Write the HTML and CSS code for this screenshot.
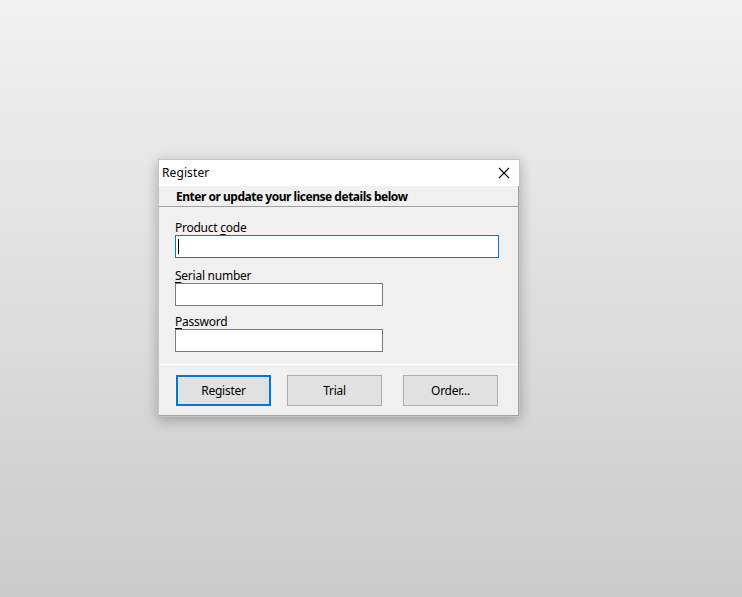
FILE: index.html
```html
<!DOCTYPE html>
<html>
<head>
<meta charset="utf-8">
<link rel="stylesheet" href="styles.css">
</head>
<body>
<div class="desktop">
  <div class="dialog">
    <div class="titlebar">
      <span class="title">Register</span>
      <svg class="close" width="12" height="12" viewBox="0 0 12 12"><path d="M1 1 L11 11 M11 1 L1 11" stroke="#000" stroke-width="1.1" fill="none"/></svg>
    </div>
    <div class="content">
      <div class="header">Enter or update your license details below</div>
      <div class="form">
        <div class="label">Product <u>c</u>ode</div>
        <div class="field wide focused"><span class="caret"></span></div>
        <div class="label l2"><u>S</u>erial number</div>
        <div class="field"></div>
        <div class="label l3"><u>P</u>assword</div>
        <div class="field"></div>
      </div>
      <div class="footer">
        <div class="btn default">Register</div>
        <div class="btn b2">Trial</div>
        <div class="btn b3">Order...</div>
      </div>
    </div>
  </div>
</div>
</body>
</html>
```

FILE: styles.css
```css
html, body {
  margin: 0;
  padding: 0;
}
body {
  width: 742px;
  height: 597px;
  background: linear-gradient(to bottom, #f1f1f1 0%, #cbcbcb 100%);
  font-family: "Noto Sans", "Open Sans", sans-serif;
  font-size: 12px;
  letter-spacing: -0.25px;
  color: #000;
  overflow: hidden;
}
.desktop {
  padding: 159px 0 0 158px;
}
.dialog {
  width: 360px;
  border: 1px solid #c4c4c4;
  background: #fff;
  box-shadow: 0 3px 12px rgba(0, 0, 0, 0.28);
}
.titlebar {
  height: 26px;
  display: flex;
  align-items: center;
  justify-content: space-between;
  padding: 0 9px 0 3px;
  background: #fff;
}
.title {
  line-height: 26px;
  letter-spacing: 0.1px;
}
.close {
  display: block;
}
.content {
  background: #f0f0f0;
  border-right: 1px solid #a0a0a0;
  border-bottom: 1px solid #a0a0a0;
}
.header {
  height: 19px;
  padding-top: 1px;
  line-height: 20px;
  padding-left: 17px;
  font-weight: bold;
  letter-spacing: -0.48px;
  border-bottom: 1px solid #a0a0a0;
  background: #f0f0f0;
}
.form {
  padding: 12px 19px 12px 16px;
}
.label {
  line-height: 18px;
  height: 16px;
}
.label u {
  text-decoration-thickness: 1px;
  text-underline-offset: 2px;
}
.l2 { margin-top: 9px; }
.l3 { margin-top: 7px; }
.field {
  box-sizing: border-box;
  width: 208px;
  height: 23px;
  background: #fff;
  border: 1px solid #7a7a7a;
  position: relative;
}
.field.wide {
  width: 324px;
}
.field.focused {
  border-color: #0078d7;
}
.caret {
  position: absolute;
  left: 2px;
  top: 3px;
  width: 1px;
  height: 15px;
  background: #000;
}
.footer {
  border-top: 1px solid #ffffff;
  display: flex;
  padding: 10px 0 9px 17px;
}
.btn {
  box-sizing: border-box;
  width: 95px;
  height: 31px;
  line-height: 29px;
  text-align: center;
  background: #e1e1e1;
  border: 1px solid #adadad;
}
.btn.default {
  border: 2px solid #0078d7;
  line-height: 27px;
}
.b2 { margin-left: 16px; }
.b3 { margin-left: 21px; }
```
